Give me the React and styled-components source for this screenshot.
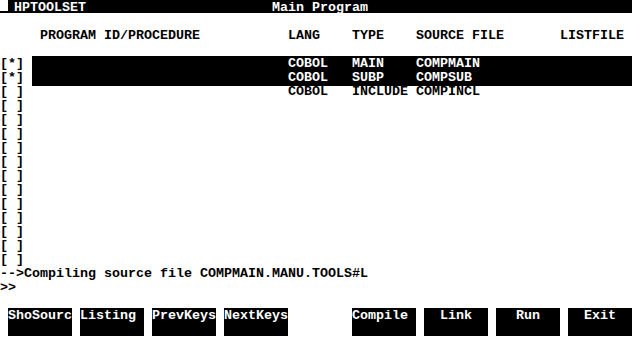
import React from 'react';
import styled, { createGlobalStyle } from 'styled-components';

const Global = createGlobalStyle`
  html, body { margin: 0; padding: 0; background: #fff; }
  body { width: 640px; height: 350px; overflow: hidden; }
`;

const Screen = styled.div`
  width: 640px;
  height: 350px;
  display: flex;
  flex-direction: column;
  font-family: "Liberation Mono", "DejaVu Sans Mono", monospace;
  font-size: 13.333px;
  font-weight: 700;
  color: #000;
  background: #fff;
  white-space: pre;
`;

const TitleRow = styled.div`
  display: flex;
  height: 14px;
`;

const Cursor = styled.div`
  width: 8px;
  height: 13px;
  box-sizing: border-box;
  border-bottom: 2px solid #000;
`;

const TitleBar = styled.div`
  flex: 1;
  margin-right: 8px;
  height: 13px;
  line-height: 15px;
  background: #000;
  color: #fff;
  display: grid;
  grid-template-columns: 264px 1fr;
`;

const AppName = styled.span`
  padding-left: 6px;
`;

const Line = styled.div`
  height: 14px;
  line-height: 16px;
`;

const Row = styled.div`
  display: grid;
  grid-template-columns: 32px 600px;
  height: 14px;
  line-height: 16px;
`;

const Fields = styled.div`
  display: grid;
  grid-template-columns: 256px 64px 64px 144px 72px;
  background: ${p => (p.$selected ? '#000' : 'transparent')};
  color: ${p => (p.$selected ? '#fff' : '#000')};
`;

const Cell = styled.span`
  padding-left: ${p => p.$indent || 0}px;
`;

const KeyBar = styled.div`
  display: flex;
  justify-content: space-between;
  padding: 14px 8px 0;
`;

const KeyGroup = styled.div`
  display: flex;
  gap: 8px;
`;

const Key = styled.div`
  width: 64px;
  height: 28px;
  background: #000;
  color: #fff;
  line-height: 16px;
  text-align: ${p => (p.$center ? 'center' : 'left')};
  overflow: hidden;
`;

const rows = [
  { sel: true, mark: '[*]', lang: 'COBOL', type: 'MAIN', src: 'COMPMAIN' },
  { sel: true, mark: '[*]', lang: 'COBOL', type: 'SUBP', src: 'COMPSUB' },
  { sel: false, mark: '[ ]', lang: 'COBOL', type: 'INCLUDE', src: 'COMPINCL' },
];
while (rows.length < 15) rows.push({ sel: false, mark: '[ ]', lang: '', type: '', src: '' });

const leftKeys = ['ShoSourc', 'Listing', 'PrevKeys', 'NextKeys'];
const rightKeys = ['Compile', 'Link', 'Run', 'Exit'];

export default function App() {
  return (
    <>
      <Global />
      <Screen>
        <TitleRow>
          <Cursor />
          <TitleBar>
            <AppName>HPTOOLSET</AppName>
            <span>Main Program</span>
          </TitleBar>
        </TitleRow>
        <Line />
        <Row>
          <span />
          <Fields>
            <Cell $indent={8}>PROGRAM ID/PROCEDURE</Cell>
            <Cell>LANG</Cell>
            <Cell>TYPE</Cell>
            <Cell>SOURCE FILE</Cell>
            <Cell>LISTFILE</Cell>
          </Fields>
        </Row>
        <Line />
        {rows.map((r, i) => (
          <Row key={i}>
            <span>{r.mark}</span>
            <Fields $selected={r.sel}>
              <Cell />
              <Cell>{r.lang}</Cell>
              <Cell>{r.type}</Cell>
              <Cell>{r.src}</Cell>
              <Cell />
            </Fields>
          </Row>
        ))}
        <Line>--&gt;Compiling source file COMPMAIN.MANU.TOOLS#L</Line>
        <Line>&gt;&gt;</Line>
        <KeyBar>
          <KeyGroup>
            {leftKeys.map(k => <Key key={k}>{k}</Key>)}
          </KeyGroup>
          <KeyGroup>
            {rightKeys.map(k => <Key key={k} $center={k !== 'Compile'}>{k}</Key>)}
          </KeyGroup>
        </KeyBar>
      </Screen>
    </>
  );
}
